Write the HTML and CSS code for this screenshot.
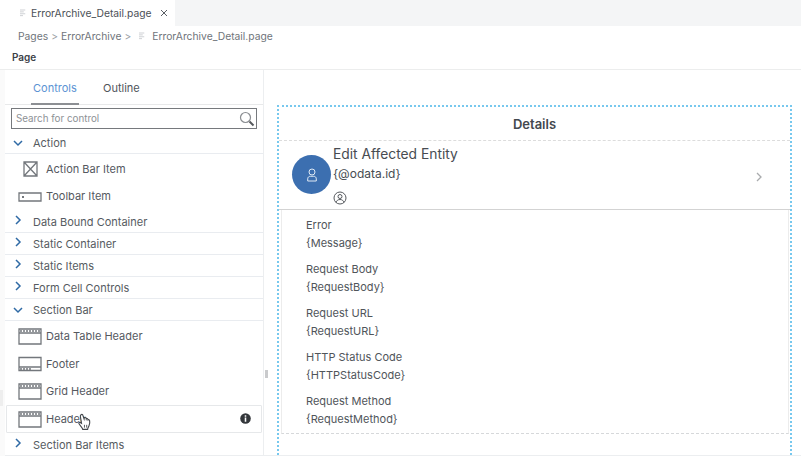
FILE: index.html
```html
<!DOCTYPE html>
<html lang="en">
<head>
<meta charset="utf-8">
<title>ErrorArchive_Detail.page</title>
<link rel="stylesheet" href="styles.css">
</head>
<body>
<div class="app">
  <div class="tabstrip">
    <div class="filetab">
      <svg class="fileicon" viewBox="0 0 8 10"><path d="M0 1h7M0 3.5h5M0 6h7M0 8.500h4"/></svg>
      <span>ErrorArchive_Detail.page</span>
      <svg class="close" viewBox="0 0 8 8"><path d="M1 1l6 6M7 1l-6 6"/></svg>
    </div>
  </div>
  <div class="crumbs">
    <span>Pages</span><span class="sep">&gt;</span><span>ErrorArchive</span><span class="sep">&gt;</span>
    <svg class="fileicon crumbicon" viewBox="0 0 8 10"><path d="M0 1h7M0 3.500h5M0 6h7M0 8.500h4"/></svg>
    <span>ErrorArchive_Detail.page</span>
  </div>
  <div class="pagetitle">Page</div>
  <div class="workspace">
    <aside class="palette">
      <div class="tabs">
        <div class="tab active">Controls</div>
        <div class="tab">Outline</div>
      </div>
      <div class="search">
        <span>Search for control</span>
        <svg class="searchicon" viewBox="0 0 16 16"><circle cx="6.500" cy="6.500" r="5"/><path class="handle" d="M10.500 10.500l4 4"/></svg>
      </div>
      <div class="group open"><svg class="chev" viewBox="0 0 10 10"><path d="M1 3l4 4 4-4"/></svg>Action</div>
      <div class="item first"><svg class="ctl" viewBox="0 0 24 24"><path d="M6 5h13v14H6zM6 5l13 14M19 5L6 19"/></svg>Action Bar Item</div>
      <div class="item"><svg class="ctl" viewBox="0 0 24 24"><path d="M1 9h22v8H1z"/><path class="dot" d="M4 12h2v2H4z"/></svg>Toolbar Item</div>
      <div class="group"><svg class="chev" viewBox="0 0 10 10"><path d="M3 1l4 4-4 4"/></svg>Data Bound Container</div>
      <div class="group"><svg class="chev" viewBox="0 0 10 10"><path d="M3 1l4 4-4 4"/></svg>Static Container</div>
      <div class="group"><svg class="chev" viewBox="0 0 10 10"><path d="M3 1l4 4-4 4"/></svg>Static Items</div>
      <div class="group"><svg class="chev" viewBox="0 0 10 10"><path d="M3 1l4 4-4 4"/></svg>Form Cell Controls</div>
      <div class="group open"><svg class="chev" viewBox="0 0 10 10"><path d="M1 3l4 4 4-4"/></svg>Section Bar</div>
      <div class="item first"><svg class="ctl" viewBox="0 0 24 24"><path d="M1 5h22v15H1zM1 9h22"/><path class="dash" d="M2 7h20"/></svg>Data Table Header</div>
      <div class="item"><svg class="ctl" viewBox="0 0 24 24"><path d="M1 5.500h22v13H1zM1 15h22"/><path class="dash" d="M2 17h12"/></svg>Footer</div>
      <div class="item"><svg class="ctl" viewBox="0 0 24 24"><path d="M1 5h22v15H1zM1 9h22"/><path class="dash" d="M2 7h20"/></svg>Grid Header</div>
      <div class="item hover"><svg class="ctl" viewBox="0 0 24 24"><path d="M1 5h22v15H1zM1 9h22"/><path class="dash" d="M2 7h20"/></svg><span>Header</span>
        <svg class="info" viewBox="0 0 10 10"><circle cx="5" cy="5" r="4.800"/><path d="M4.300 2h1.400v1.300H4.300zM4.300 4.200h1.400V8H4.300z"/></svg>
        <svg class="cursor" viewBox="0 0 14 16"><path d="M3.500 1.500c.8-.6 1.500 0 1.700.8l1 3 .2-1c.3-.8 1.300-.7 1.500.1l.2 1c.3-.7 1.200-.6 1.400.1l.2.700c.4-.5 1.300-.3 1.400.4.300 1.500.2 3.500-.6 5-.5 1-1.200 2-1.200 3H5c-.2-1.500-2-3-3.300-5-.5-.8.300-1.700 1.100-1.200l1.100.8-1-6c-.1-.6.200-1.400.600-1.700z"/><path class="grip" d="M6.500 10.500v2.500M8.500 10.500v2.500"/></svg>
      </div>
      <div class="group last"><svg class="chev" viewBox="0 0 10 10"><path d="M3 1l4 4-4 4"/></svg>Section Bar Items</div>
    </aside>
    <div class="splitter"></div>
    <main class="canvas">
      <div class="frame">
        <div class="details">Details</div>
        <div class="entity">
          <div class="avatar"><svg viewBox="0 0 14 16"><circle cx="7" cy="4.500" r="3.500"/><path d="M2 15v-2.500c0-2 1.500-3 3-3h4c1.500 0 3 1 3 3V15z"/></svg></div>
          <div class="entitytext">
            <div class="headline">Edit Affected Entity</div>
            <div class="subline">{@odata.id}</div>
            <svg class="usericon" viewBox="0 0 14 14"><circle cx="7" cy="7" r="6"/><circle cx="7" cy="5.500" r="2"/><path d="M3 11.500c.6-2 2-3 4-3s3.400 1 4 3"/></svg>
          </div>
          <svg class="rowchev" viewBox="0 0 6 10"><path d="M1 1l4 4-4 4"/></svg>
        </div>
        <div class="fields">
          <div class="field"><div>Error</div><div>{Message}</div></div>
          <div class="field"><div>Request Body</div><div>{RequestBody}</div></div>
          <div class="field"><div>Request URL</div><div>{RequestURL}</div></div>
          <div class="field"><div>HTTP Status Code</div><div>{HTTPStatusCode}</div></div>
          <div class="field"><div>Request Method</div><div>{RequestMethod}</div></div>
        </div>
      </div>
    </main>
  </div>
</div>
</body>
</html>
```
FILE: styles.css
```css
* { box-sizing: border-box; }
html, body { margin: 0; height: 100%; overflow: hidden; }
body { background: #fff; font-family: Inter, "Liberation Sans", sans-serif; color: #4a4f55; font-size: 11px; }
.app { height: 456px; display: flex; flex-direction: column; padding-left: 5px; background: #fafafa; }
.tabstrip { height: 26px; background: #f4f5f6; display: flex; flex: none; margin-left: -5px; }
.filetab { width: 175px; background: #fff; display: flex; align-items: center; padding-left: 20px; gap: 5px; color: #4c5157; font-size: 10.300px; }
.fileicon { width: 6px; height: 8px; fill: none; stroke: #c9ccd0; stroke-width: 1.200; flex: none; }
.close { width: 8px; height: 8px; fill: none; stroke: #5a5f65; stroke-width: 1; margin-left: 3px; flex: none; }
.crumbs { height: 19px; flex: none; display: flex; align-items: center; margin-left: -5px; padding-left: 18px; gap: 3px; color: #70757b; background: #fff; font-size: 10.300px; }
.crumbs .sep { color: #9a9ea3; }
.crumbicon { margin: 0 4px 0 5px; }
.pagetitle { height: 25px; flex: none; margin-left: -5px; padding: 6px 0 0 12px; font-size: 10px; font-weight: 600; color: #3c4147; background: #fff; border-bottom: 1px solid #eceded; }
.workspace { flex: 1; display: flex; min-height: 0; position: relative; border-bottom: 1px solid #eceef0; }
.workspace::before { content: ""; position: absolute; left: -5px; top: 320px; width: 3px; height: 16px; background: #eeeeee; }
.palette { width: 259px; flex: none; background: #fff; border-right: 1px solid #eceef0; display: flex; flex-direction: column; }
.splitter { position: absolute; left: 260px; top: 300px; width: 3px; height: 8px; background: #c9cacc; }
.tabs { height: 35px; flex: none; display: flex; padding-left: 26px; border-bottom: 1px solid #e8e9ea; gap: 22px; }
.tab { padding: 0 2px; line-height: 36px; font-size: 11px; color: #50555b; }
.tab.active { color: #5b93d3; border-bottom: 2px solid #8c8f93; height: 35px; width: 48px; }
.search { margin: 3px 6px 3px 6px; height: 21px; flex: none; border: 1px solid #76797d; display: flex; align-items: center; justify-content: space-between; padding: 0 1px 0 4px; color: #8d9195; font-size: 9.800px; }
.searchicon { width: 16px; height: 16px; fill: none; stroke: #8a8d91; stroke-width: 1.200; }
.searchicon .handle { stroke: #55585c; stroke-width: 2; }
.group { height: 22px; flex: none; display: flex; align-items: center; padding-left: 8px; gap: 10px; font-size: 11px; color: #565b61; border-bottom: 1px solid #e9ecf0; }
.chev { width: 10px; height: 10px; flex: none; fill: none; stroke: #2f6aa5; stroke-width: 1.500; }
.group:not(.open) .chev { margin-top: -3px; }
.item { height: 27.600px; flex: none; display: flex; align-items: center; padding-left: 13px; gap: 4px; color: #55595f; }
.item.first { margin-top: 1px; }
.item + .group { margin-top: 1px; }
.ctl { width: 24px; height: 24px; flex: none; fill: none; stroke: #73777c; stroke-width: 1.300; }
.ctl .dash { stroke-dasharray: 2 1; stroke-width: 1.500; }
.ctl .dot { fill: #73777c; stroke: none; }
.hover { position: relative; margin: 0 1px 0 1px; padding-left: 11px; border: 1px solid #e6e8ea; border-radius: 1px; }
.info { position: absolute; right: 10px; top: 7px; width: 11px; height: 11px; fill: #34373b; }
.info path { fill: #fff; }
.cursor { position: absolute; left: 70px; top: 7px; width: 16px; height: 18px; fill: #fff; stroke: #44474b; stroke-width: 1; }
.cursor .grip { fill: none; stroke-width: .8; }
.group.last { border-bottom: none; margin-top: 1px; }
.canvas { flex: 1; padding: 35px 9px 0 13px; min-width: 0; background: #fff; }
.frame { height: 100%; border: 2px dotted #77c8ee; border-bottom: none; background: #fff; }
.details { height: 34px; display: flex; align-items: center; justify-content: center; font-size: 13px; font-weight: 600; color: #43484e; border-bottom: 1px dashed #dcdcdc; }
.entity { height: 69px; display: flex; position: relative; padding-left: 13px; border-bottom: 1px solid #d3d3d3; }
.avatar { width: 39px; height: 39px; margin-top: 14px; border-radius: 50%; background: #3c6fb0; display: flex; align-items: center; justify-content: center; flex: none; }
.avatar svg { width: 12px; height: 16px; fill: none; stroke: #e9f0f8; stroke-width: 1.100; }
.entitytext { margin-left: 2px; padding-top: 4px; }
.headline { font-size: 13.800px; line-height: 19px; color: #474c52; }
.subline { font-size: 12px; line-height: 19px; color: #474c52; }
.usericon { display: block; width: 14px; height: 14px; margin-top: 8px; fill: none; stroke: #55595e; stroke-width: 1; }
.rowchev { position: absolute; right: 28px; top: 31px; width: 6px; height: 10px; fill: none; stroke: #a9abad; stroke-width: 1.300; }
.fields { margin: 0 1px 0 2px; height: 224px; padding-top: 6px; border-left: 1px solid #ececec; border-right: 1px solid #ececec; border-bottom: 1px dashed #d6d8da; }
.field { height: 44px; padding-left: 24px; font-size: 11px; line-height: 18px; color: #50555a; }
```
